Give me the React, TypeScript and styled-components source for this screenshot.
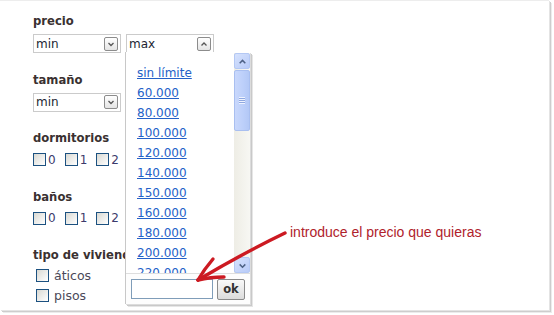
import React from "react";
import styled, { createGlobalStyle } from "styled-components";

const GlobalStyle = createGlobalStyle`
  html, body {
    margin: 0;
    padding: 0;
    background: #ffffff;
  }
  body {
    width: 554px;
    height: 315px;
    overflow: hidden;
    font-family: "DejaVu Sans", Verdana, sans-serif;
  }
`;

const Frame = styled.div`
  position: relative;
  width: 549px;
  height: 310px;
  box-sizing: border-box;
  background: #ffffff;
  border-top: 1px solid #ededed;
  box-shadow: 1px 1px 0 #e4e4e4, 2px 2px 0 #cdcdcd, 3px 3px 0 #ececec;
`;

const Form = styled.div`
  display: flex;
  flex-direction: column;
  padding: 13px 0 0 33px;
`;

const Section = styled.div`
  display: flex;
  flex-direction: column;
  gap: 6px;
  min-height: 58.5px;
`;

const Heading = styled.div`
  font-family: "DejaVu Sans", Verdana, sans-serif;
  font-weight: bold;
  font-size: 11.6px;
  line-height: 14px;
  color: #3a3131;
  white-space: nowrap;
`;

const SelectRow = styled.div`
  display: flex;
  gap: 5px;
`;

const SelectBox = styled.div`
  display: flex;
  align-items: center;
  justify-content: space-between;
  box-sizing: border-box;
  width: 88px;
  height: 19px;
  padding: 0 2px 0 2px;
  border: 1px solid #cbcbcb;
  background: #ffffff;
  font-size: 12px;
  color: #221f33;
`;

const ArrowButton = styled.span`
  display: flex;
  align-items: center;
  justify-content: center;
  box-sizing: border-box;
  width: 14px;
  height: 14px;
  border: 1px solid #8c8c8c;
  border-radius: 2px;
  background: linear-gradient(#ffffff, #e4e4e4);
`;

const CheckRow = styled.div`
  display: flex;
  align-items: center;
  gap: 9px;
  height: 17px;
`;

const CheckItem = styled.label`
  display: flex;
  align-items: center;
  gap: 2px;
  font-size: 12px;
  color: ${(p: { $muted?: boolean }) => (p.$muted ? "#4a4858" : "#3c3a6c")};
`;

const Box = styled.span`
  display: inline-block;
  box-sizing: border-box;
  width: 13px;
  height: 13px;
  border: 1px solid #1c5180;
  background: linear-gradient(135deg, #d9d9d3, #ffffff);
`;

const TypeList = styled.div`
  display: flex;
  flex-direction: column;
  padding-left: 3px;
  margin-top: -3px;
`;

const TypeRow = styled(CheckItem)`
  height: 20px;
  gap: 5px;
  font-size: 12.5px;
`;

/* dropdown opened under the "max" select */
const Popup = styled.div`
  position: absolute;
  left: 125px;
  top: 51px;
  width: 125px;
  height: 252px;
  box-sizing: border-box;
  display: flex;
  flex-direction: column;
  background: #ffffff;
  border-left: 1px solid #c8c8c8;
  box-shadow: 1px 1px 0 #dcdcdc, 2px 2px 0 #c9c9c9, 3px 3px 0 #e6e6e6;
`;

const ListArea = styled.div`
  display: flex;
  height: 221px;
  padding-top: 1px;
  box-sizing: border-box;
`;

const List = styled.div`
  flex: 1;
  overflow: hidden;
  padding: 10px 0 0 11px;
`;

const Option = styled.a`
  display: block;
  height: 20px;
  line-height: 20px;
  font-size: 12px;
  color: #2461c8;
  text-decoration: underline;
  white-space: nowrap;
`;

const Scrollbar = styled.div`
  display: flex;
  flex-direction: column;
  justify-content: space-between;
  width: 16px;
  background: linear-gradient(90deg, #eeede5, #f7f7f3);
`;

const ScrollTop = styled.div`
  display: flex;
  flex-direction: column;
  gap: 1px;
`;

const ScrollButton = styled.div`
  display: flex;
  align-items: center;
  justify-content: center;
  box-sizing: border-box;
  width: 16px;
  height: 16px;
  border: 1px solid #b4c8f4;
  border-radius: 2px;
  background: linear-gradient(135deg, #d6e2fd, #b8cbf8);
`;

const Thumb = styled.div`
  display: flex;
  align-items: center;
  justify-content: center;
  box-sizing: border-box;
  width: 16px;
  height: 61px;
  border: 1px solid #a9bff0;
  border-radius: 2px;
  background: linear-gradient(90deg, #c9d8fc, #bccffa 60%, #b3c8f6);
`;

const Grip = styled.div`
  width: 6px;
  height: 7px;
  background: repeating-linear-gradient(#eef3ff 0 1px, #8fa8e0 1px 2px);
`;

const Footer = styled.div`
  display: flex;
  align-items: center;
  gap: 4px;
  flex: 1;
  padding: 0 5px;
  border-top: 1px solid #dedede;
  background: #fdfdfd;
`;

const PriceInput = styled.input`
  box-sizing: border-box;
  width: 82px;
  height: 20px;
  margin: 0;
  border: 1px solid #7f9db9;
  background: #ffffff;
`;

const OkButton = styled.button`
  box-sizing: border-box;
  width: 29px;
  height: 21px;
  padding: 0;
  border: 1px solid #8a8a8a;
  border-radius: 2px;
  background: linear-gradient(#f9f9f9, #dcdcdc);
  font-family: "DejaVu Sans", Verdana, sans-serif;
  font-weight: bold;
  font-size: 11.5px;
  color: #333333;
`;

/* annotation drawn on top of the screenshot */
const Note = styled.div`
  position: absolute;
  left: 290px;
  top: 223px;
  font-family: "Liberation Sans", Arial, sans-serif;
  font-size: 14px;
  color: #b0222c;
  white-space: nowrap;
`;

const ArrowMark = styled.svg`
  position: absolute;
  left: 190px;
  top: 222px;
  width: 100px;
  height: 66px;
  overflow: visible;
`;

const Chevron: React.FC<{ up?: boolean; color?: string; size?: number }> = ({
  up,
  color = "#555",
  size = 8,
}) => (
  <svg width={size} height={size} viewBox="0 0 8 8">
    <path
      d={up ? "M1.5 5.5 L4 3 L6.5 5.5" : "M1.5 3 L4 5.5 L6.5 3"}
      fill="none"
      stroke={color}
      strokeWidth="1.3"
    />
  </svg>
);

const Select: React.FC<{ value: string; open?: boolean }> = ({ value, open }) => (
  <SelectBox>
    <span>{value}</span>
    <ArrowButton>
      <Chevron up={open} />
    </ArrowButton>
  </SelectBox>
);

const Checks: React.FC = () => (
  <CheckRow>
    {["0", "1", "2"].map((n) => (
      <CheckItem key={n}>
        <Box />
        {n}
      </CheckItem>
    ))}
  </CheckRow>
);

// the last entry is half hidden by the list's bottom edge, as in the open menu
const options = [
  "sin límite",
  "60.000",
  "80.000",
  "100.000",
  "120.000",
  "140.000",
  "150.000",
  "160.000",
  "180.000",
  "200.000",
  "220.000",
];

export default function App() {
  return (
    <>
      <GlobalStyle />
      <Frame>
        <Form>
          <Section>
            <Heading>precio</Heading>
            <SelectRow>
              <Select value="min" />
              <Select value="max" open />
            </SelectRow>
          </Section>
          <Section>
            <Heading>tamaño</Heading>
            <SelectRow>
              <Select value="min" />
            </SelectRow>
          </Section>
          <Section>
            <Heading>dormitorios</Heading>
            <Checks />
          </Section>
          <Section>
            <Heading>baños</Heading>
            <Checks />
          </Section>
          <Section>
            <Heading>tipo de vivienda</Heading>
            <TypeList>
              <TypeRow $muted>
                <Box />
                áticos
              </TypeRow>
              <TypeRow $muted>
                <Box />
                pisos
              </TypeRow>
            </TypeList>
          </Section>
        </Form>

        <Popup>
          <ListArea>
            <List>
              {options.map((o) => (
                <Option key={o}>{o}</Option>
              ))}
            </List>
            <Scrollbar>
              <ScrollTop>
                <ScrollButton>
                  <Chevron up color="#4d6185" size={9} />
                </ScrollButton>
                <Thumb>
                  <Grip />
                </Thumb>
              </ScrollTop>
              <ScrollButton>
                <Chevron color="#4d6185" size={9} />
              </ScrollButton>
            </Scrollbar>
          </ListArea>
          <Footer>
            <PriceInput />
            <OkButton>ok</OkButton>
          </Footer>
        </Popup>

        <Note>introduce el precio que quieras</Note>
        <ArrowMark viewBox="0 0 100 66">
          <g
            fill="none"
            stroke="#cc1a22"
            strokeWidth="3.4"
            strokeLinecap="round"
            strokeLinejoin="round"
          >
            <path d="M95 10 C70 22, 40 38, 8 57" />
            <path d="M8 57 C12 50, 17 43, 23 36" />
            <path d="M8 57 C16 55, 25 54, 34 54" />
          </g>
        </ArrowMark>
      </Frame>
    </>
  );
}
